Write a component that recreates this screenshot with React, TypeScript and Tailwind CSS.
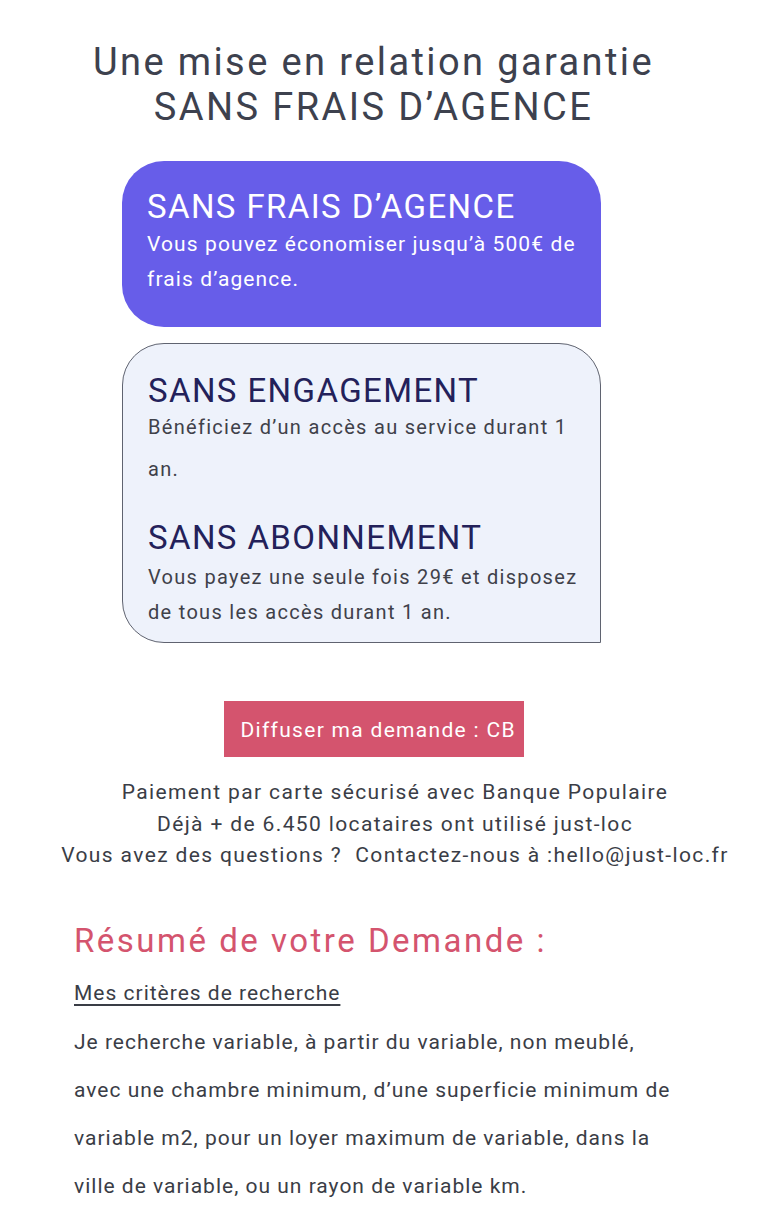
export default function App() {
  return (
    <main className="w-[760px] min-h-[1225px] bg-white font-['Roboto',sans-serif] text-[#3d414e]">
      <h1 className="pt-[40px] pr-[13px] text-center text-[38px] leading-[45px] tracking-[2.4px] text-[#3d414e]">
        Une mise en relation garantie
        <br />
        SANS FRAIS D’AGENCE
      </h1>

      <section className="mt-[31px] ml-[122px] w-[479px]">
        <div className="h-[166px] rounded-tl-[42px] rounded-tr-[42px] rounded-bl-[42px] bg-[#675de9] pl-[25px] pr-[10px] pt-[31px] text-white">
          <h2 className="text-[33px] leading-[30px] tracking-[1.4px]">SANS FRAIS D’AGENCE</h2>
          <p className="mt-[5px] text-[21px] leading-[35px] tracking-[1.1px]">
            Vous pouvez économiser jusqu’à 500€ de frais d’agence.
          </p>
        </div>

        <div className="mt-[16px] h-[300px] rounded-tl-[42px] rounded-tr-[42px] rounded-bl-[42px] border border-[#5f6370] bg-[#eef2fb] pl-[25px] pr-[14px] pt-[32px]">
          <h2 className="text-[33px] leading-[30px] tracking-[1.4px] text-[#23215a]">SANS ENGAGEMENT</h2>
          <p className="text-[20px] leading-[42px] tracking-[1.3px] text-[#3f414a]">
            Bénéficiez d’un accès au service durant 1 an.
          </p>
          <h2 className="mt-[33px] text-[33px] leading-[30px] tracking-[1.4px] text-[#23215a]">SANS ABONNEMENT</h2>
          <p className="mt-[7px] text-[20px] leading-[35px] tracking-[1.3px] text-[#3f414a]">
            Vous payez une seule fois 29€ et disposez de tous les accès durant 1 an.
          </p>
        </div>
      </section>

      <div className="mt-[58px] flex justify-center pr-[13px]">
        <button className="h-[56px] w-[300px] bg-[#d4546e] pl-[17px] pt-[4px] text-left text-[21px] tracking-[1.3px] text-white">
          Diffuser ma demande : CB
        </button>
      </div>

      <div className="mt-[20px] pl-[30px] text-center text-[21px] leading-[31.5px] tracking-[1.37px] text-[#3a3d46]">
        <p>Paiement par carte sécurisé avec Banque Populaire</p>
        <p>Déjà + de 6.450 locataires ont utilisé just-loc</p>
        <p>Vous avez des questions ?&nbsp; Contactez-nous à :hello@just-loc.fr</p>
      </div>

      <section className="mt-[49px] pl-[74px] pr-[40px]">
        <h2 className="text-[33px] leading-[40px] tracking-[2.5px] text-[#d4546e]">Résumé de votre Demande :</h2>
        <h3 className="mt-[17px] text-[21px] leading-[30px] tracking-[1px] underline underline-offset-[4px] text-[#3a3d46]">
          Mes critères de recherche
        </h3>
        <p className="mt-[10px] text-[21px] leading-[48px] tracking-[1px] text-[#3a3d46]">
          Je recherche variable, à partir du variable, non meublé,
          <br />
          avec une chambre minimum, d’une superficie minimum de
          <br />
          variable m2, pour un loyer maximum de variable, dans la
          <br />
          ville de variable, ou un rayon de variable km.
        </p>
      </section>
    </main>
  );
}
